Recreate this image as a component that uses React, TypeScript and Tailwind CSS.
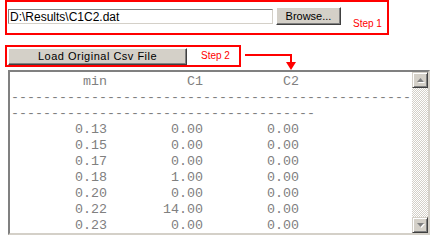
const rows: [string, string, string][] = [
  ["0.13", "0.00", "0.00"],
  ["0.15", "0.00", "0.00"],
  ["0.17", "0.00", "0.00"],
  ["0.18", "1.00", "0.00"],
  ["0.20", "0.00", "0.00"],
  ["0.22", "14.00", "0.00"],
  ["0.23", "0.00", "0.00"],
];

const line = (cols: string[]) => cols.map((c) => c.padStart(12)).join("");

function ScrollArrow({ up }: { up?: boolean }) {
  return (
    <div className="flex h-[16px] w-[16px] items-center justify-center border border-t-[#d4d0c8] border-l-[#d4d0c8] border-b-[#404040] border-r-[#404040] bg-[#d4d0c8] shadow-[inset_1px_1px_0_#ffffff,inset_-1px_-1px_0_#808080]">
      <svg width="9" height="6" viewBox="0 0 9 6">
        {up ? (
          <>
            <path d="M1 5 L4.5 1 L8 5 Z" fill="#ffffff" transform="translate(1 1)" />
            <path d="M1 5 L4.5 1 L8 5 Z" fill="#808080" />
          </>
        ) : (
          <>
            <path d="M1 1 L4.5 5 L8 1 Z" fill="#ffffff" transform="translate(1 1)" />
            <path d="M1 1 L4.5 5 L8 1 Z" fill="#808080" />
          </>
        )}
      </svg>
    </div>
  );
}

export default function App() {
  const sans = "font-['Liberation_Sans',Arial,sans-serif]";
  const lines = [
    line(["min", "C1", "C2"]),
    "-".repeat(50),
    "-".repeat(38),
    ...rows.map((r) => line(r)),
  ];

  return (
    <div className={`h-[243px] w-[445px] overflow-hidden bg-white ${sans}`}>
      {/* step 1 */}
      <div className="ml-[5px] flex h-[35px] w-[384px] items-start border-2 border-[#ff0000]">
        <div className="ml-[1px] mt-[7px] flex h-[15px] w-[265px] items-center border border-t-[#808080] border-l-[#808080] border-b-[#d4d0c8] border-r-[#d4d0c8] bg-white pl-[1px] text-[12px] leading-none text-black">
          D:\Results\C1C2.dat
        </div>
        <button className="ml-[3px] mt-[5px] flex h-[18px] w-[65px] items-center justify-center border border-t-white border-l-white border-b-[#404040] border-r-[#404040] bg-[#d4d0c8] text-[11px] leading-none text-black shadow-[inset_-1px_-1px_0_#808080]">
          Browse...
        </button>
        <span className="ml-[12px] mt-[16px] text-[10px] leading-[12px] text-[#ff0000]">Step 1</span>
      </div>

      {/* step 2 */}
      <div className="mt-[10px] flex items-start">
        <div className="ml-[5px] flex h-[22px] w-[236px] items-start border-2 border-[#ff0000]">
          <button className="ml-[1px] mt-[1px] flex h-[17px] w-[179px] items-center justify-center border border-t-white border-l-white border-b-[#404040] border-r-[#404040] bg-[#d4d0c8] text-[11px] leading-none tracking-[0.5px] text-black shadow-[inset_-1px_-1px_0_#808080]">
            Load Original Csv File
          </button>
          <span className="ml-[14px] mt-[3px] text-[10px] leading-[12px] text-[#ff0000]">Step 2</span>
        </div>
        <svg width="56" height="25" viewBox="0 0 56 25" className="ml-[2px]">
          <path d="M2 10 H48 V19" stroke="#ff0000" strokeWidth="2" fill="none" />
          <path d="M43 17 L53 17 L48 25 Z" fill="#ff0000" />
        </svg>
      </div>

      {/* output */}
      <div className="ml-[8px] flex h-[165px] w-[422px] border-2 border-t-[#808080] border-l-[#808080] border-b-[#d4d0c8] border-r-[#d4d0c8] bg-white">
        <pre className="min-w-0 flex-1 overflow-hidden pl-[1px] pt-[2px] font-['Liberation_Mono','Courier_New',monospace] text-[13.33px] leading-[16px] text-[#808080]">
          {lines.join("\n")}
        </pre>
        <div className="flex w-[16px] flex-col bg-[repeating-conic-gradient(#d4d0c8_0_25%,#ffffff_0_50%)] bg-size-[2px_2px]">
          <ScrollArrow up />
          <div className="flex-1" />
          <ScrollArrow />
        </div>
      </div>
    </div>
  );
}
